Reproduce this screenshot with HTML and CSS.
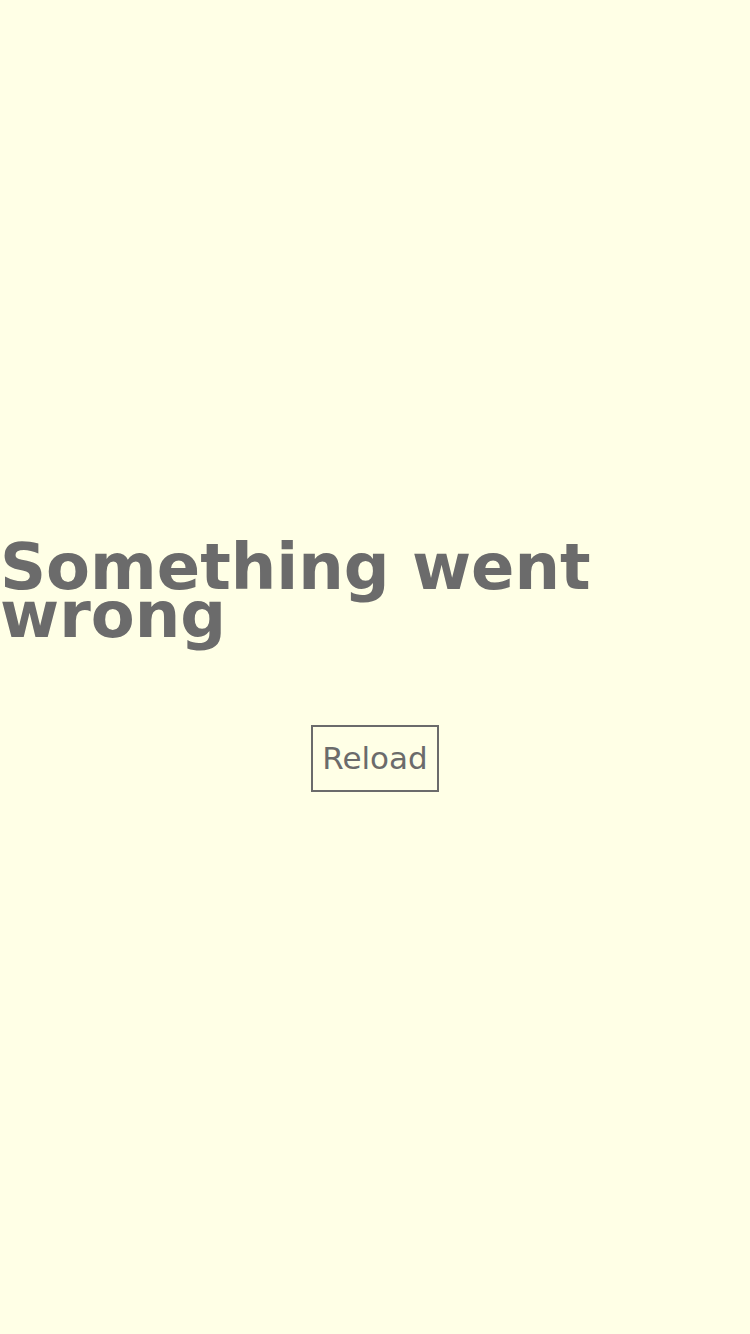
FILE: index.html
```html
<!DOCTYPE html>
<html lang="en">
<head>
<meta charset="utf-8">
<title>Something went wrong</title>
<link rel="stylesheet" href="styles.css">
</head>
<body>
<main class="error">
  <h1 class="error-title">Something went wrong</h1>
  <div class="error-actions">
    <button class="reload-btn" type="button">Reload</button>
  </div>
</main>
</body>
</html>
```
FILE: styles.css
```css
html, body {
  margin: 0;
  padding: 0;
  background: #ffffe6;
}
body {
  font-family: "DejaVu Sans", Verdana, sans-serif;
  color: #6b6b6b;
}
.error {
  min-height: 1334px;
  display: flex;
  flex-direction: column;
  justify-content: center;
  gap: 86px;
}
.error-title {
  margin: 0;
  font-size: 64px;
  line-height: 48px;
  font-weight: bold;
  color: #6b6b6b;
}
.error-actions {
  display: flex;
  justify-content: center;
}
.reload-btn {
  font-family: "DejaVu Sans", Verdana, sans-serif;
  font-size: 31px;
  line-height: 35px;
  color: #6b6b6b;
  background: transparent;
  border: 2px solid #6b6b6b;
  border-radius: 0;
  padding: 14px 9px;
  margin: 0;
}
```
